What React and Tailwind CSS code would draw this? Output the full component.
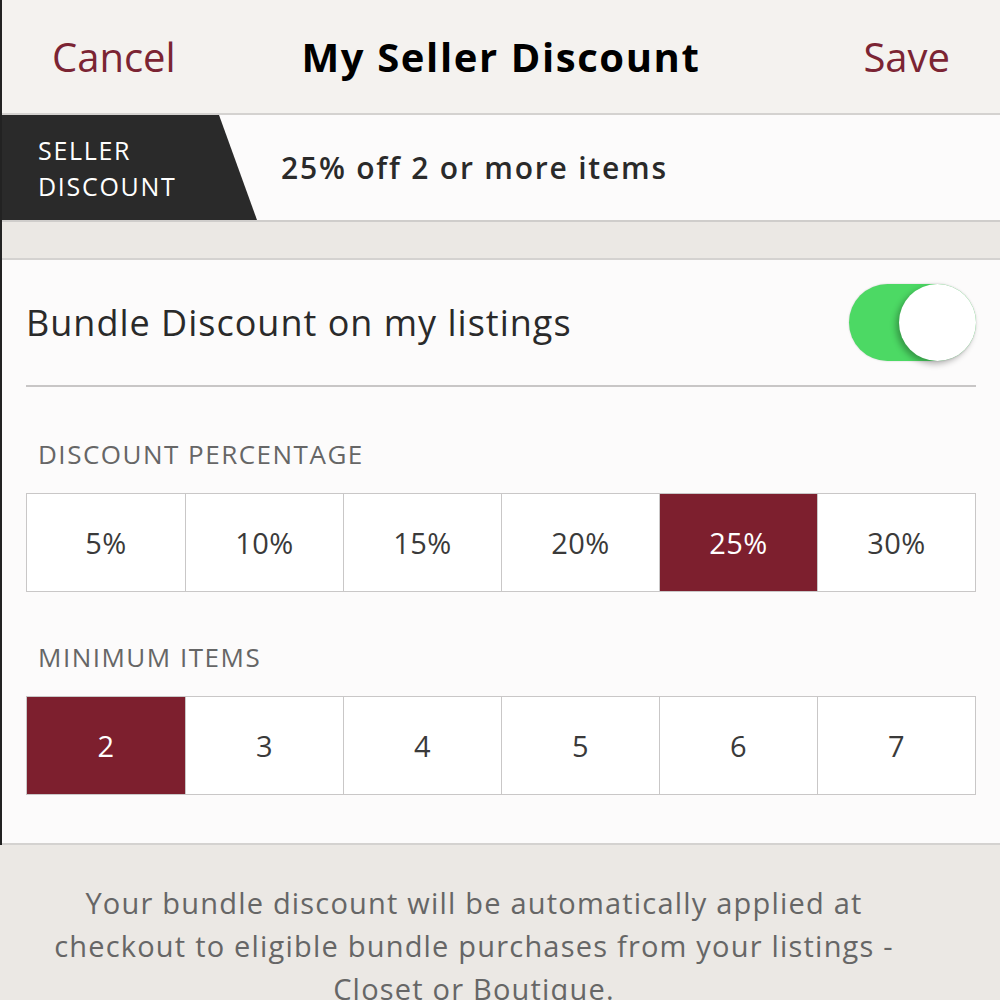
const percents = ['5%', '10%', '15%', '20%', '25%', '30%']
const items = ['2', '3', '4', '5', '6', '7']

function Segments({ values, selected }) {
  return (
    <div className="grid grid-cols-6 h-[99px] border border-[#c9c7c7] bg-white">
      {values.map((v, i) => (
        <div
          key={v}
          className={
            'flex items-center justify-center text-[29px] tracking-[0.5px] ' +
            (i > 0 ? 'border-l border-[#c9c7c7] ' : '') +
            (v === selected ? 'bg-[#7d1f2e] text-white' : 'text-[#3a3a3a]')
          }
        >
          {v}
        </div>
      ))}
    </div>
  )
}

export default function App() {
  return (
    <div className="w-[1000px] h-[1000px] overflow-hidden bg-[#ebe8e4] font-['Open_Sans',sans-serif]">
      <div className="border-l-2 border-[#222]">
        <div className="h-[115px] bg-[#f4f2ef] grid grid-cols-[1fr_auto_1fr] items-center pl-[50px] pr-[50px] border-b-2 border-[#d4d2d0]">
          <span className="text-[40px] text-[#7b2433] justify-self-start">Cancel</span>
          <span className="text-[40px] font-bold tracking-[1.6px] text-black">My Seller Discount</span>
          <span className="text-[40px] text-[#7b2433] justify-self-end">Save</span>
        </div>
        <div className="h-[107px] bg-[#fcfbfb] flex items-center border-b-2 border-[#cfcdcb]">
          <div className="h-full w-[255px] bg-[#2a2a2a] [clip-path:polygon(0_0,217px_0,255px_100%,0_100%)] flex flex-col justify-center pl-[36px] text-white text-[25px] tracking-[1.7px] leading-[36px]">
            <span>SELLER</span>
            <span>DISCOUNT</span>
          </div>
          <span className="ml-[24px] text-[30px] font-semibold tracking-[1.8px] text-[#2a2a2a]">25% off 2 or more items</span>
        </div>
        <div className="h-[38px] bg-[#ebe8e4] border-b-2 border-[#d4d2d0]"></div>
        <div className="bg-[#fcfbfb] px-[24px] h-[585px] border-b-2 border-[#d4d2d0]">
          <div className="h-[127px] flex items-center justify-between border-b-2 border-[#c8c6c6]">
            <span className="text-[36px] tracking-[1px] text-[#2a2a2a]">Bundle Discount on my listings</span>
            <div className="w-[127px] h-[77px] rounded-full bg-[#4cd964] relative shadow-[0_0_2px_rgba(0,0,0,0.2)]">
              <div className="absolute right-0 top-0 w-[77px] h-[77px] rounded-full bg-white shadow-[-3px_3px_6px_rgba(0,0,0,0.3)]"></div>
            </div>
          </div>
          <div className="pt-[52px] pl-[12px] text-[26px] tracking-[1.5px] text-[#666] leading-[30px]">DISCOUNT PERCENTAGE</div>
          <div className="mt-[24px]">
            <Segments values={percents} selected="25%" />
          </div>
          <div className="pt-[50px] pl-[12px] text-[26px] tracking-[1.5px] text-[#666] leading-[30px]">MINIMUM ITEMS</div>
          <div className="mt-[24px]">
            <Segments values={items} selected="2" />
          </div>
        </div>
      </div>
      <div className="pt-[36px] pr-[52px] text-center text-[29px] tracking-[1.2px] leading-[43px] text-[#666]">
        Your bundle discount will be automatically applied at
        <br />
        checkout to eligible bundle purchases from your listings -
        <br />
        Closet or Boutique.
      </div>
    </div>
  )
}
